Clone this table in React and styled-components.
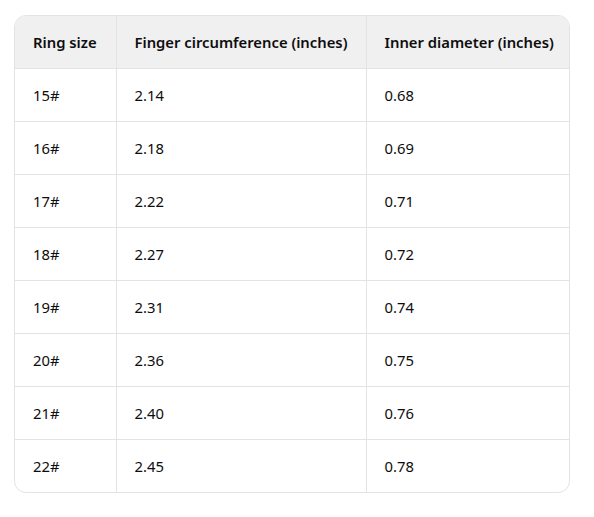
import React from "react";
import styled, { createGlobalStyle } from "styled-components";

const Global = createGlobalStyle`
  html, body { margin: 0; padding: 0; background: #ffffff; }
  body { font-family: "Segoe UI", "Noto Sans", "Open Sans", sans-serif; }
`;

const Page = styled.div`
  padding: 15px 24px 0 14px;
`;

const Frame = styled.div`
  width: 556px;
  box-sizing: border-box;
  border: 1px solid #e3e3e3;
  border-radius: 12px;
  overflow: hidden;
`;

const Table = styled.table`
  width: 100%;
  table-layout: fixed;
  border-collapse: collapse;
  font-size: 14.8px;
  color: #0d0d0d;
`;

const Th = styled.th`
  background: #f0f0f0;
  text-align: left;
  font-weight: 600;
  height: 52px;
  padding: 0 0 0 18px;
  white-space: nowrap;
  box-sizing: border-box;
  border-bottom: 1px solid #e3e3e3;
  border-left: ${(p) => (p.$first ? "none" : "1px solid #e3e3e3")};
  width: ${(p) => (p.$w ? `${p.$w}px` : "auto")};
`;

const Td = styled.td`
  height: 53px;
  padding: 0 18px;
  box-sizing: border-box;
  white-space: nowrap;
  border-top: ${(p) => (p.$firstRow ? "none" : "1px solid #e3e3e3")};
  border-left: ${(p) => (p.$first ? "none" : "1px solid #e3e3e3")};
  font-weight: 400;
`;

const rows = [
  ["15#", "2.14", "0.68"],
  ["16#", "2.18", "0.69"],
  ["17#", "2.22", "0.71"],
  ["18#", "2.27", "0.72"],
  ["19#", "2.31", "0.74"],
  ["20#", "2.36", "0.75"],
  ["21#", "2.40", "0.76"],
  ["22#", "2.45", "0.78"],
];

export default function App() {
  return (
    <>
      <Global />
      <Page>
        <Frame>
          <Table>
            <thead>
              <tr>
                <Th $first $w={101}>Ring size</Th>
                <Th $w={250}>Finger circumference (inches)</Th>
                <Th>Inner diameter (inches)</Th>
              </tr>
            </thead>
            <tbody>
              {rows.map((r, i) => (
                <tr key={r[0]}>
                  {r.map((c, j) => (
                    <Td key={j} $first={j === 0} $firstRow={i === 0}>
                      {c}
                    </Td>
                  ))}
                </tr>
              ))}
            </tbody>
          </Table>
        </Frame>
      </Page>
    </>
  );
}
